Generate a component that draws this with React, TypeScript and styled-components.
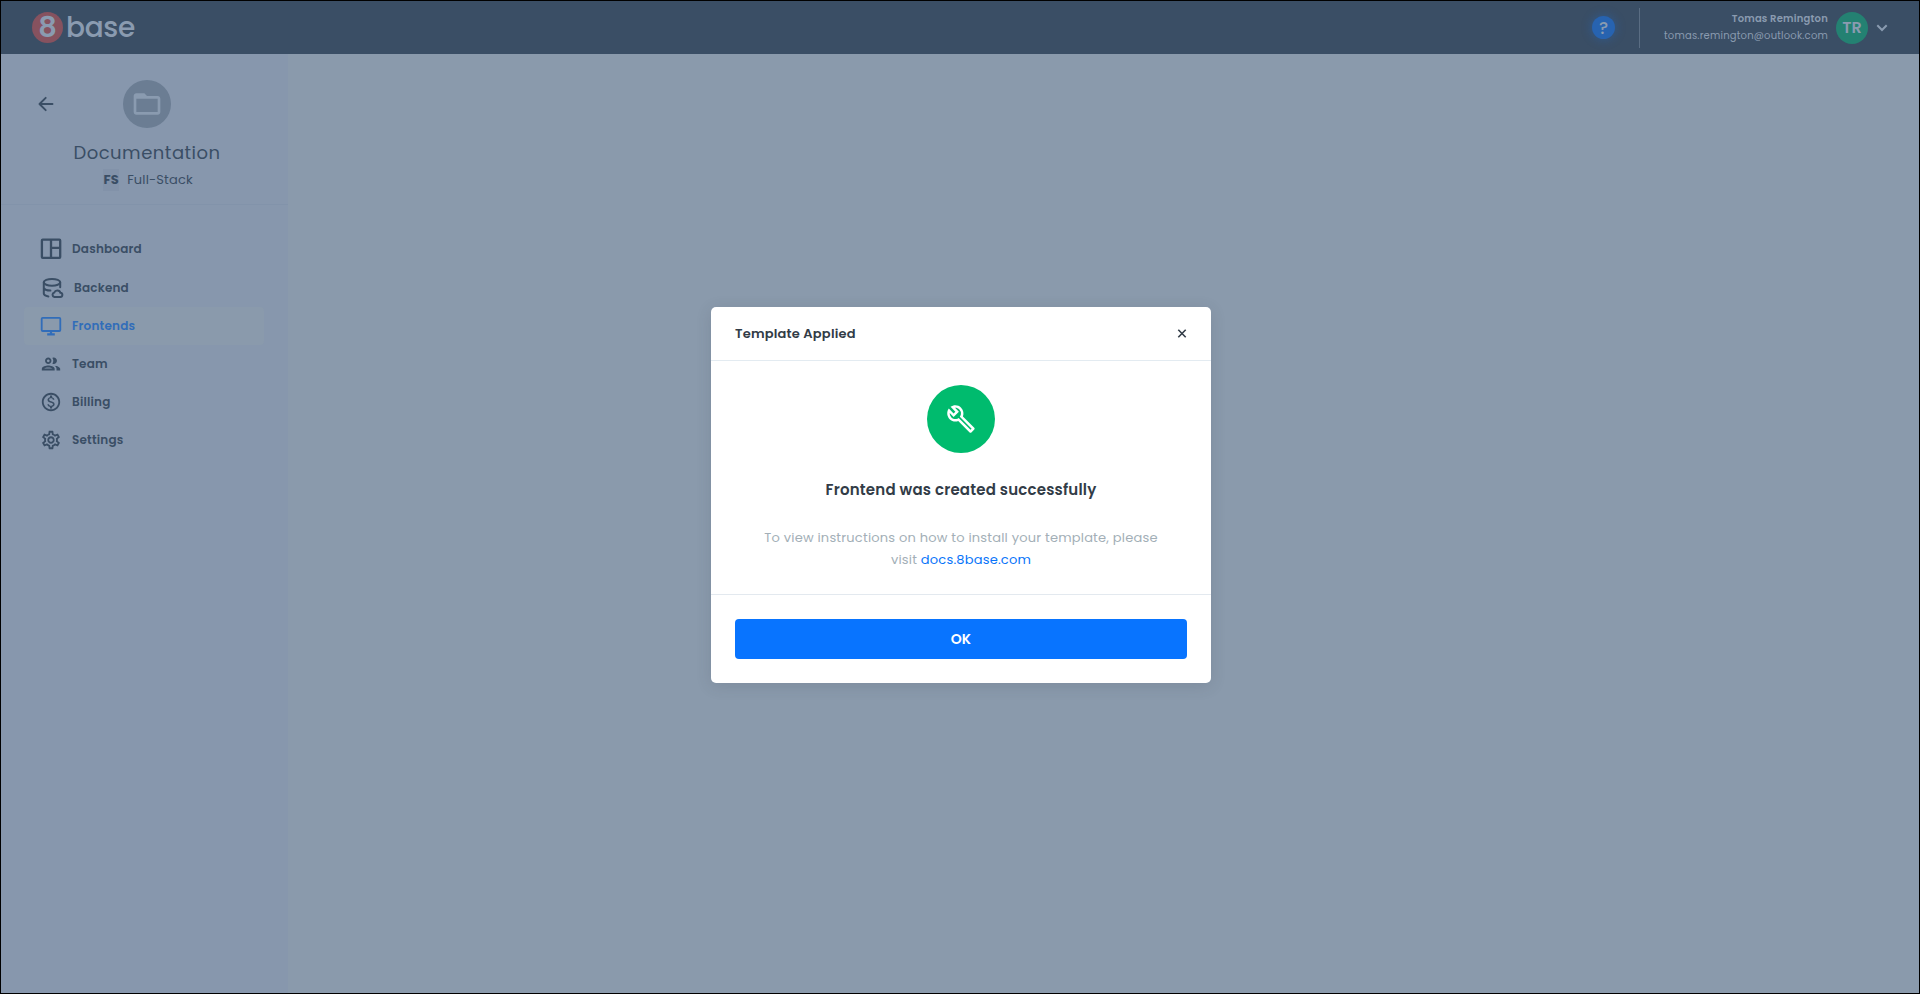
import React from "react";
import styled, { createGlobalStyle } from "styled-components";
import {
  MdFolderOpen,
  MdOutlineBuild,
  MdOutlineGroup,
  MdOutlineMonetizationOn,
  MdOutlineSettings,
} from "react-icons/md";

const ink = "#3a4e65";
const page = "#8a9aac";

const GlobalStyle = createGlobalStyle`
  * { box-sizing: border-box; }
  body {
    margin: 0;
    font-family: Poppins, Inter, "Open Sans", sans-serif;
    overflow: hidden;
  }
`;

const Frame = styled.div`
  width: 1920px;
  height: 994px;
  border: 1px solid #000;
  background: ${page};
  display: flex;
  flex-direction: column;
`;

const Text = styled.span<{ $size: number; $weight?: number; $track?: number; $line?: number }>`
  font-size: ${(p) => p.$size}px;
  font-weight: ${(p) => p.$weight ?? 400};
  letter-spacing: ${(p) => p.$track ?? 0.2}px;
  line-height: ${(p) => p.$line ?? 20}px;
  white-space: nowrap;
`;

const Header = styled.header`
  height: 53px;
  flex: none;
  display: flex;
  align-items: center;
  justify-content: space-between;
  padding: 0 31px;
  background: ${ink};
  color: #8a9bb0;
`;

const Brand = styled.div`
  display: flex;
  align-items: center;
  gap: 3px;
  padding-bottom: 1px;
`;

const BrandMark = styled.span`
  width: 31px;
  height: 31px;
  border-radius: 50%;
  background: #86525f;
  display: grid;
  place-items: center;
`;

const HeaderSide = styled.div`
  display: flex;
  align-items: center;
`;

const Help = styled.span`
  width: 23px;
  height: 23px;
  border-radius: 50%;
  background: #2763b0;
  box-shadow: 0 0 8px 2px rgba(39, 99, 176, 0.4);
  display: grid;
  place-items: center;
`;

const Separator = styled.span`
  width: 1px;
  height: 40px;
  margin: 0 24px;
  background: #5a6d83;
`;

const Account = styled.div`
  width: 164px;
  display: flex;
  flex-direction: column;
  align-items: flex-end;
  padding-bottom: 1px;
`;

const Avatar = styled.span`
  width: 32px;
  height: 32px;
  margin: 0 8px;
  border-radius: 50%;
  background: #248172;
  display: grid;
  place-items: center;
`;

const Body = styled.div`
  flex: 1;
  display: flex;
`;

const Sidebar = styled.aside`
  width: 287px;
  background: #8797ad;
  color: ${ink};
`;

const Project = styled.section`
  height: 151px;
  padding-top: 26px;
  border-bottom: 1px solid #8293aa;
  display: flex;
  flex-direction: column;
  align-items: center;
`;

const ProjectTop = styled.div`
  width: 100%;
  height: 48px;
  padding: 0 117px 0 37px;
  display: flex;
  align-items: center;
  justify-content: space-between;
`;

const ProjectIcon = styled.span`
  width: 48px;
  height: 48px;
  border-radius: 50%;
  background: #6b7d93;
  color: #8a9bb0;
  display: grid;
  place-items: center;
`;

const ProjectName = styled.div`
  margin-top: 13px;
  padding-left: 5px;
`;

const Plan = styled.div`
  display: flex;
  align-items: center;
  gap: 8px;
  margin-top: 3px;
  padding-left: 7px;
`;

const PlanTag = styled.span`
  background: #8292a9;
  display: flex;
  height: 22px;
  width: 16px;
  align-items: center;
  justify-content: center;
`;

const Nav = styled.nav`
  padding: 24px 24px 0 23px;
`;

const NavItem = styled.a<{ $active?: boolean; $tall?: boolean; $inset?: number }>`
  height: ${(p) => (p.$tall ? 39 : 38)}px;
  padding-left: ${(p) => 16 + (p.$inset ?? 0)}px;
  border-radius: 4px;
  background: ${(p) => (p.$active ? "#8a9aac" : "transparent")};
  color: ${(p) => (p.$active ? "#316db9" : ink)};
  display: flex;
  align-items: center;
  gap: 10px;
  svg { width: 22px; height: 22px; flex: none; }
`;

const Overlay = styled.div`
  position: absolute;
  inset: 0;
  width: 1920px;
  height: 994px;
  padding: 307px 0 0 711px;
`;

const Dialog = styled.section`
  width: 500px;
  height: 376px;
  border-radius: 5px;
  background: #fff;
  color: #323c47;
  box-shadow: 0 3px 16px rgba(50, 60, 71, 0.14);
  display: flex;
  flex-direction: column;
`;

const DialogHeader = styled.header`
  height: 54px;
  padding: 0 24px;
  border-bottom: 1px solid #e3ebf1;
  display: flex;
  align-items: center;
  justify-content: space-between;
`;

const DialogBody = styled.div`
  height: 234px;
  padding-top: 24px;
  border-bottom: 1px solid #e3e9ef;
  display: flex;
  flex-direction: column;
  align-items: center;
`;

const Badge = styled.span`
  width: 68px;
  height: 68px;
  border-radius: 50%;
  background: #00bb6e;
  color: #fff;
  display: grid;
  place-items: center;
  margin-bottom: 26px;
`;

const Message = styled.p`
  margin: 26px 0 0;
  color: #a3afb7;
  display: flex;
  flex-direction: column;
  align-items: center;
`;

const Link = styled.a`
  color: #0874f9;
`;

const DialogFooter = styled.footer`
  padding: 24px;
`;

const Button = styled.button`
  width: 100%;
  height: 40px;
  border: 0;
  border-radius: 4px;
  background: #0874ff;
  color: #fff;
  font-family: inherit;
  display: flex;
  align-items: center;
  justify-content: center;
`;

const DashboardIcon = () => (
  <svg viewBox="0 0 22 22" fill="none" stroke="currentColor" strokeWidth="2.300">
    <rect x="1.900" y="1.600" width="18.300" height="18.300" rx="0.8" />
    <path d="M11 1.500V20M11 9.800h9" />
  </svg>
);

const BackendIcon = () => (
  <svg viewBox="0 0 22 22" fill="none" stroke="currentColor" strokeWidth="2" strokeLinecap="round">
    <ellipse cx="10" cy="5.300" rx="8.200" ry="3.400" />
    <path d="M1.800 5.300v11.200c0 1.300 1.800 2.400 4.600 2.900M18.200 5.300v5M1.800 11c.7 1.500 3.200 2.500 6.600 2.600" />
    <path d="M12.400 20h5.700a2.100 2.100 0 0 0 .3-4.200 3.200 3.200 0 0 0-6.100-.3 2.300 2.300 0 0 0 .1 4.500z" />
  </svg>
);

const MonitorIcon = () => (
  <svg viewBox="0 0 22 22" fill="none" stroke="currentColor" strokeWidth="1.800">
    <rect x="1.700" y="2.800" width="18.600" height="13.200" rx="1" />
    <path d="M11 16v4M7.200 19.400h7.600" strokeWidth="2.200" />
  </svg>
);

const BackIcon = () => (
  <svg width="16" height="16" viewBox="0 0 16 16" fill="none" stroke="currentColor" strokeWidth="1.900" strokeLinecap="round" strokeLinejoin="round">
    <path d="M14.500 8H1.500M7.700 1.800 1.500 8l6.200 6.200" />
  </svg>
);

const ChevronIcon = () => (
  <svg width="12" height="8" viewBox="0 0 12 8" fill="none" stroke="currentColor" strokeWidth="2">
    <path d="M1.300 1.300 6 6l4.700-4.700" />
  </svg>
);

const CloseIcon = () => (
  <svg width="10" height="10" viewBox="0 0 10 10" fill="none" stroke="currentColor" strokeWidth="1.600">
    <path d="M1.300.8 8.700 8.200M8.700.8 1.300 8.200" />
  </svg>
);

const items = [
  { label: "Dashboard", icon: <DashboardIcon />, tall: true },
  { label: "Backend", icon: <BackendIcon />, inset: 2, tall: true },
  { label: "Frontends", icon: <MonitorIcon />, active: true },
  { label: "Team", icon: <MdOutlineGroup /> },
  { label: "Billing", icon: <MdOutlineMonetizationOn /> },
  { label: "Settings", icon: <MdOutlineSettings /> },
];

export default function App() {
  return (
    <>
      <GlobalStyle />
      <Frame>
        <Header>
          <Brand>
            <BrandMark><Text $size={29} $weight={600} $line={31} $track={0}>8</Text></BrandMark>
            <Text $size={28} $weight={500} $track={-0.3} $line={31}>base</Text>
          </Brand>
          <HeaderSide>
            <Help><Text $size={17} $weight={500} $track={0}>?</Text></Help>
            <Separator />
            <Account>
              <Text $size={10} $weight={600} $line={17}>Tomas Remington</Text>
              <Text $size={10} $line={17}>tomas.remington@outlook.com</Text>
            </Account>
            <Avatar><Text $size={16} $weight={600} $track={0}>TR</Text></Avatar>
            <ChevronIcon />
          </HeaderSide>
        </Header>
        <Body>
          <Sidebar>
            <Project>
              <ProjectTop>
                <BackIcon />
                <ProjectIcon><MdFolderOpen size={32} /></ProjectIcon>
              </ProjectTop>
              <ProjectName><Text $size={18} $track={0.5} $line={24}>Documentation</Text></ProjectName>
              <Plan>
                <PlanTag><Text $size={13} $weight={700} $track={0}>FS</Text></PlanTag>
                <Text $size={13} $track={0.15}>Full-Stack</Text>
              </Plan>
            </Project>
            <Nav>
              {items.map((item) => (
                <NavItem key={item.label} $active={item.active} $tall={item.tall} $inset={item.inset}>
                  {item.icon}
                  <Text $size={12} $weight={600}>{item.label}</Text>
                </NavItem>
              ))}
            </Nav>
          </Sidebar>
        </Body>
      </Frame>
      <Overlay>
        <Dialog>
          <DialogHeader>
            <Text $size={13} $weight={600}>Template Applied</Text>
            <CloseIcon />
          </DialogHeader>
          <DialogBody>
            <Badge><MdOutlineBuild size={30} /></Badge>
            <Text $size={15} $weight={600} $line={22}>Frontend was created successfully</Text>
            <Message>
              <Text $size={13} $line={22}>To view instructions on how to install your template, please</Text>
              <Text $size={13} $line={22}>visit <Link>docs.8base.com</Link></Text>
            </Message>
          </DialogBody>
          <DialogFooter>
            <Button><Text $size={14} $weight={600} $track={0}>OK</Text></Button>
          </DialogFooter>
        </Dialog>
      </Overlay>
    </>
  );
}
